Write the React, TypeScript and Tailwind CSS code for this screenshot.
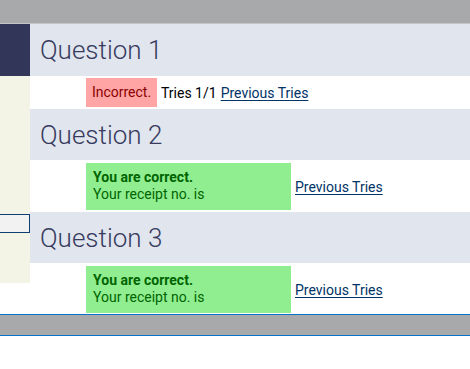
import React from 'react';

const font = { fontFamily: 'Roboto, "Liberation Sans", sans-serif' };

const QuestionHead = ({ n, h }: { n: number; h: string }) => (
  <div className={`${h} bg-[#e1e5ee] pl-[10px] flex items-center`}>
    <h2 className="text-[26px] font-light text-[#373b5e] leading-none">Question {n}</h2>
  </div>
);

const Correct = ({ h }: { h: string }) => (
  <div className={`${h} bg-white flex items-start pt-[3px]`}>
    <div className="ml-[56px] w-[205px] h-[47px] bg-[#90ee90] px-[7px] pt-[6px] text-[14px] leading-[17px] text-[#006400]">
      <div className="font-bold">You are correct.</div>
      <div>Your receipt no. is</div>
    </div>
    <a className="ml-[4px] self-center text-[14px] text-[#003366] underline underline-offset-2">Previous Tries</a>
  </div>
);

const App = () => {
  return (
    <div className="w-[470px] h-[369px] bg-white overflow-hidden" style={font}>
      <div className="h-[24px] bg-[#a8a9ab] border-b border-[#c4c5c7]"></div>

      <div className="flex">
        <aside className="w-[30px] shrink-0 flex flex-col">
          <div className="h-[52px] bg-[#323658]"></div>
          <div className="h-[207px] bg-[#f3f4e6] pt-[138px]">
            <div className="h-[19px] border border-[#0d3f73] border-l-0 bg-[#f2f2f2]"></div>
          </div>
        </aside>

        <main className="flex-1">
          <QuestionHead n={1} h="h-[52px]" />
          <div className="h-[33px] bg-white flex items-start pt-[2px] text-[14px]">
            <span className="ml-[56px] h-[29px] w-[71px] bg-[#ffa5a5] text-[#8b0000] flex items-center justify-center">Incorrect.</span>
            <span className="ml-[4px] self-center text-black">Tries 1/1</span>
            <a className="ml-[4px] self-center text-[#003366] underline underline-offset-2">Previous Tries</a>
          </div>

          <QuestionHead n={2} h="h-[51px]" />
          <Correct h="h-[52px]" />

          <QuestionHead n={3} h="h-[51px]" />
          <Correct h="h-[51px]" />
        </main>
      </div>

      <div className="h-[22px] bg-[#a8a9ab] border-y border-[#0a72c8]"></div>
    </div>
  );
};

export default App;
